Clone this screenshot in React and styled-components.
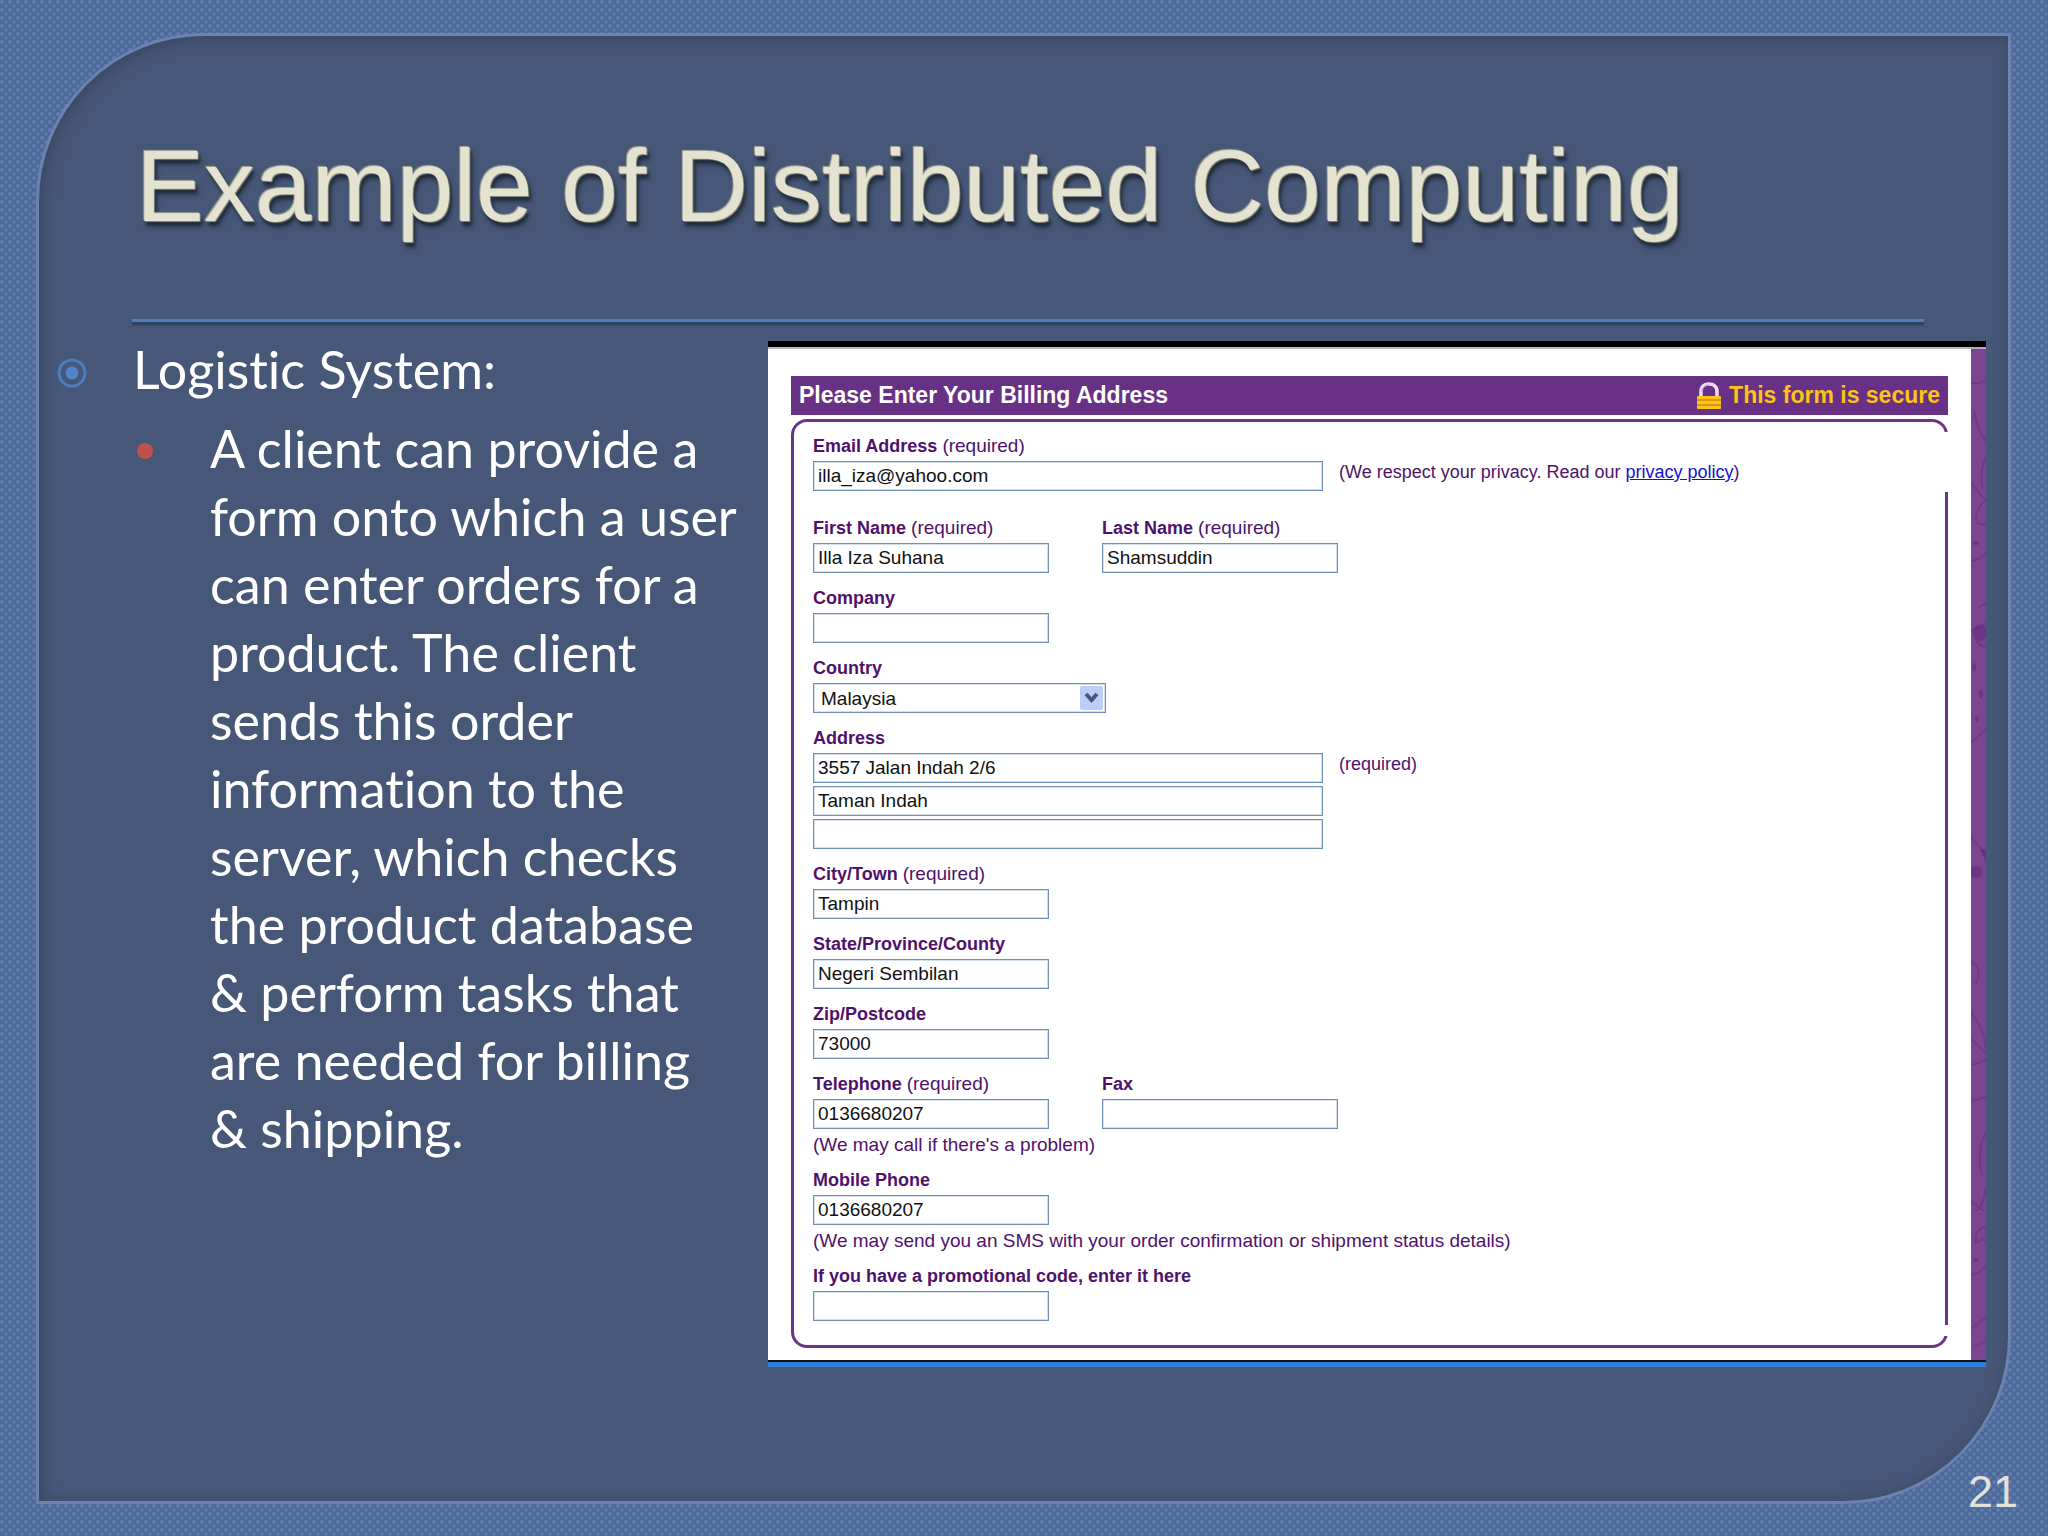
import React from "react";
import styled, { createGlobalStyle } from "styled-components";

const sans = `"Liberation Sans", Arial, sans-serif`;

const GlobalStyle = createGlobalStyle`
  *, *::before, *::after { box-sizing: border-box; }
  body { margin: 0; font-family: ${sans}; }
`;

const Slide = styled.main`
  position: relative;
  display: flex;
  min-height: 100vh;
  padding: 33px 37px 32px 36px;
  background-color: #4d6999;
  background-image:
    radial-gradient(circle at 2px 2px, #6b89b5 0, #5673a3 2px, transparent 3px),
    radial-gradient(circle at 6px 6px, #6785b1 0, #5371a0 2px, transparent 3px);
  background-size: 8px 8px;
`;

const Panel = styled.section`
  flex: 1;
  display: flex;
  flex-direction: column;
  padding: 0 22px 0 0;
  background: #475777;
  border: 3px solid #6c83b0;
  border-radius: 168px 0 168px 0;
  box-shadow: inset 2px 2px 14px #34465f;
`;

const Header = styled.header`
  margin: 0 62px 0 93px;
  padding-top: 93px;
`;

const Title = styled.h1`
  margin: 0 0 76px;
  padding-left: 4px;
  font-size: 102px;
  line-height: 114px;
  font-weight: 400;
  color: #e4e2d0;
  text-shadow:
    -1px -1px 1px #a9ab98,
    1px 1px 1px #8c8e78,
    2px 4px 3px #1f2a3c,
    3px 6px 5px #2e3b52;
`;

const Rule = styled.hr`
  height: 3px;
  margin: 0;
  border: 0;
  background: #5080bc;
  box-shadow: 0 3px 2px #2b3d5a;
`;

const Columns = styled.div`
  display: grid;
  grid-template-columns: 729fr 1218fr;
  align-items: start;
  margin-top: 19px;
`;

const Outline = styled.ul`
  margin: 0;
  padding: 0 12px 0 17px;
  list-style: none;
  font-family: Lato, Carlito, sans-serif;
  font-size: 52px;
  font-variant-ligatures: none;
  line-height: 68px;
  color: #ffffff;
`;

const OutlineItem = styled.li`
  display: grid;
  grid-template-columns: 77px 1fr;
`;

const OutlineText = styled.span`
  margin-top: -6px;
`;

const SubList = styled.ul`
  grid-column: 2;
  margin: 17px 0 0;
  padding: 0;
  list-style: none;
`;

const Ring = styled.svg`
  width: 32px;
  height: 32px;
  margin-top: 16px;
`;

const Dot = styled.span`
  width: 16px;
  height: 16px;
  margin: 23px 0 0 4px;
  border-radius: 50%;
  background: #c0504d;
`;

const Capture = styled.div`
  display: grid;
  grid-template-columns: 1fr 15px;
  background: #ffffff;
  border-top: 6px solid #000000;
  border-bottom: 5px solid #2f7fdc;
`;

const CaptureBody = styled.div`
  padding: 27px 23px 12px;
  border-top: 2px solid #b9b9bd;
  border-bottom: 2px solid #10131c;
`;

const Strip = styled.svg`
  width: 100%;
  height: 100%;
  background: #7a468f;
  border-top: 2px solid #b7a3c2;
  border-bottom: 2px solid #10131c;
`;

const FormBar = styled.div`
  display: flex;
  justify-content: space-between;
  align-items: center;
  height: 39px;
  padding: 0 8px;
  background: #693185;
  color: #ffffff;
  font-size: 23px;
  font-weight: 700;
`;

const FormTitle = styled.h2`
  margin: 0;
  font-size: 23px;
`;

const Secure = styled.div`
  display: flex;
  align-items: center;
  gap: 7px;
  color: #fcc414;
`;

const Form = styled.form`
  position: relative;
  display: flex;
  flex-direction: column;
  gap: 15px;
  margin-top: 4px;
  padding: 14px 20px 24px 19px;
  border: 3px solid #6a3589;
  border-radius: 16px;
  color: #4f126c;
  font-size: 18px;
  line-height: 20px;

  &::before,
  &::after {
    content: "";
    position: absolute;
    right: -3px;
    width: 4px;
    background: #ffffff;
  }
  &::before { top: 10px; height: 60px; }
  &::after { bottom: 9px; height: 11px; }
`;

const Row = styled.div`
  display: grid;
  grid-template-columns: 236px 236px;
  gap: 53px;
`;

const Group = styled.div`
  margin-bottom: ${(p) => (p.$spaced ? "12px" : "0")};
`;

const Label = styled.label`
  display: block;
  height: 20px;
  margin-bottom: 5px;
  font-weight: 700;
  white-space: nowrap;
`;

const Required = styled.span`
  font-size: 19px;
  font-weight: 400;
`;

const Field = styled.input`
  display: block;
  width: ${(p) => (p.$wide ? "510px" : "236px")};
  height: 30px;
  padding: 0 4px;
  border: 1px solid #6f91b5;
  outline: 1px solid #d3dfeb;
  outline-offset: -2px;
  border-radius: 0;
  background: #ffffff;
  color: #111111;
  font: 19px ${sans};
`;

const Line = styled.div`
  display: flex;
  align-items: flex-start;
  gap: 16px;
`;

const Lines = styled.div`
  display: flex;
  flex-direction: column;
  gap: 3px;
`;

const SideNote = styled.span`
  line-height: 22px;
`;

const Note = styled.p`
  margin: 6px 0 0;
  font-size: 19px;
`;

const PolicyLink = styled.a`
  color: #1212d8;
`;

const SelectBox = styled.div`
  position: relative;
  width: 293px;
`;

const Select = styled.select`
  display: block;
  appearance: none;
  width: 100%;
  height: 30px;
  padding: 0 32px 0 7px;
  border: 1px solid #6f91b5;
  outline: 1px solid #d3dfeb;
  outline-offset: -2px;
  border-radius: 0;
  background: #ffffff;
  color: #111111;
  font: 19px ${sans};
`;

const Arrow = styled.svg`
  position: absolute;
  top: 3px;
  right: 3px;
  width: 23px;
  height: 24px;
  pointer-events: none;
`;

const PageNumber = styled.footer`
  position: absolute;
  right: 30px;
  bottom: 18px;
  font-size: 45px;
  line-height: 52px;
  color: #e3e1db;
`;

function TextField({ id, label, required, value = "", wide, type = "text" }) {
  return (
    <>
      <Label htmlFor={id}>
        {label} {required && <Required>(required)</Required>}
      </Label>
      <Field id={id} type={type} defaultValue={value} $wide={wide} />
    </>
  );
}

function Padlock() {
  return (
    <svg width="26" height="28" viewBox="0 0 26 28" aria-hidden="true">
      <path d="M5 14V9.500C5 4.500 8.500 2 13 2s8 2.500 8 7.500V14" fill="none" stroke="#f1dcf7" strokeWidth="3.500" />
      <path d="M6 10c0-4 3-7 7-7" fill="none" stroke="#b98fcb" strokeWidth="1" />
      <rect x="1" y="14" width="24" height="13" rx="1" fill="#fcc414" />
      <path d="M1 18h24M1 23h24" stroke="#c98a16" strokeWidth="1.500" />
    </svg>
  );
}

function Swirls() {
  return (
    <Strip viewBox="0 0 15 1011" preserveAspectRatio="none" aria-hidden="true">
      <g fill="none" stroke="#672f86" strokeWidth="2" opacity="0.500">
        <path d="M0 34Q8 35 15 32" />
        <path d="M3 62Q7 84 15 92M15 108Q8 122 12 140M0 134L15 152M12 152Q2 168 6 174L15 176" />
        <path d="M0 212Q11 210 15 204M8 258L15 254M0 282Q8 278 15 274M4 290Q10 300 15 296" />
        <path d="M0 394L15 380M0 488L15 506" />
        <path d="M0 612Q13 620 4 636M0 664Q12 676 15 700M0 690L15 704M0 716Q9 714 15 710M0 752L15 748" />
        <path d="M15 784Q5 800 11 826M15 838Q10 866 4 860M0 852L13 862M15 878Q3 880 5 894Q12 888 15 892" />
        <path d="M0 926Q11 924 15 916M0 980L15 968M3 998L15 992" />
      </g>
      <g fill="#5f2680" opacity="0.500">
        <ellipse cx="5" cy="194" rx="3" ry="2" />
        <ellipse cx="9" cy="284" rx="7" ry="8" />
        <ellipse cx="3" cy="318" rx="2" ry="4" />
        <ellipse cx="10" cy="345" rx="2" ry="4" />
        <ellipse cx="6" cy="370" rx="2" ry="3" />
        <ellipse cx="5" cy="523" rx="6" ry="6" />
        <ellipse cx="5" cy="911" rx="3" ry="2" />
        <path d="M9 500L15 500V514Z" />
      </g>
    </Strip>
  );
}

function BillingForm() {
  return (
    <Form onSubmit={(e) => e.preventDefault()}>
      <Group $spaced>
        <Label htmlFor="email">
          Email Address <Required>(required)</Required>
        </Label>
        <Line>
          <Field id="email" type="text" defaultValue="illa_iza@yahoo.com" $wide />
          <SideNote>
            (We respect your privacy. Read our <PolicyLink href="#privacy">privacy policy</PolicyLink>)
          </SideNote>
        </Line>
      </Group>
      <Row>
        <Group><TextField id="first" label="First Name" required value="Illa Iza Suhana" /></Group>
        <Group><TextField id="last" label="Last Name" required value="Shamsuddin" /></Group>
      </Row>
      <Group><TextField id="company" label="Company" /></Group>
      <Group>
        <Label htmlFor="country">Country</Label>
        <SelectBox>
          <Select id="country" defaultValue="Malaysia">
            <option>Malaysia</option>
          </Select>
          <Arrow viewBox="0 0 23 24" aria-hidden="true">
            <rect width="23" height="24" rx="2" fill="#bccdf6" />
            <path d="M6 8l5.500 6L17 8" fill="none" stroke="#45597f" strokeWidth="4" />
          </Arrow>
        </SelectBox>
      </Group>
      <Group>
        <Label htmlFor="address1">Address</Label>
        <Lines>
          <Line>
            <Field id="address1" defaultValue="3557 Jalan Indah 2/6" $wide />
            <SideNote>(required)</SideNote>
          </Line>
          <Field aria-label="Address line 2" defaultValue="Taman Indah" $wide />
          <Field aria-label="Address line 3" $wide />
        </Lines>
      </Group>
      <Group><TextField id="city" label="City/Town" required value="Tampin" /></Group>
      <Group><TextField id="state" label="State/Province/County" value="Negeri Sembilan" /></Group>
      <Group><TextField id="zip" label="Zip/Postcode" value="73000" /></Group>
      <Group>
        <Row>
          <div><TextField id="tel" type="tel" label="Telephone" required value="0136680207" /></div>
          <div><TextField id="fax" type="tel" label="Fax" /></div>
        </Row>
        <Note>(We may call if there's a problem)</Note>
      </Group>
      <Group>
        <TextField id="mobile" type="tel" label="Mobile Phone" value="0136680207" />
        <Note>(We may send you an SMS with your order confirmation or shipment status details)</Note>
      </Group>
      <Group><TextField id="promo" label="If you have a promotional code, enter it here" /></Group>
    </Form>
  );
}

export default function App() {
  return (
    <Slide>
      <GlobalStyle />
      <Panel>
        <Header>
          <Title>Example of Distributed Computing</Title>
          <Rule />
        </Header>
        <Columns>
          <Outline>
            <OutlineItem>
              <Ring viewBox="0 0 32 32" aria-hidden="true">
                <circle cx="16" cy="16" r="13" fill="none" stroke="#4a7fbf" strokeWidth="3" />
                <circle cx="16" cy="16" r="6.500" fill="#4f86cb" />
              </Ring>
              <OutlineText>Logistic System:</OutlineText>
              <SubList>
                <OutlineItem>
                  <Dot />
                  <OutlineText>
                    A client can provide a form onto which a user can enter orders for a product. The
                    client sends this order information to the server, which checks the product
                    database &amp;&nbsp;perform tasks that are needed for billing &amp;&nbsp;shipping.
                  </OutlineText>
                </OutlineItem>
              </SubList>
            </OutlineItem>
          </Outline>
          <Capture>
            <CaptureBody>
              <FormBar>
                <FormTitle>Please Enter Your Billing Address</FormTitle>
                <Secure>
                  <Padlock />
                  <span>This form is secure</span>
                </Secure>
              </FormBar>
              <BillingForm />
            </CaptureBody>
            <Swirls />
          </Capture>
        </Columns>
      </Panel>
      <PageNumber>21</PageNumber>
    </Slide>
  );
}
